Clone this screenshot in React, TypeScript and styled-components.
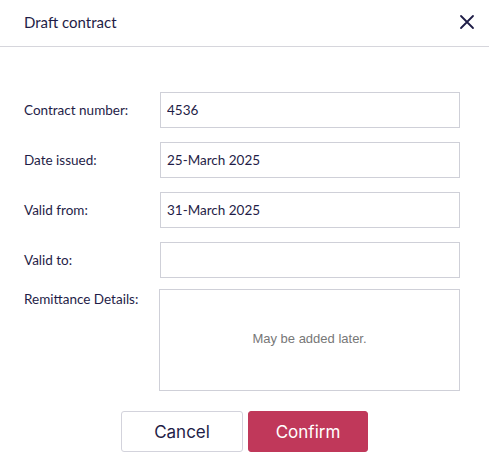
import React from "react";
import styled, { createGlobalStyle } from "styled-components";

const GlobalStyle = createGlobalStyle`
  html, body {
    margin: 0;
    padding: 0;
    background: #ffffff;
  }
  * {
    box-sizing: border-box;
  }
`;

interface Field {
  label: string;
  value: string;
}

const fields: Field[] = [
  { label: "Contract number:", value: "4536" },
  { label: "Date issued:", value: "25-March 2025" },
  { label: "Valid from:", value: "31-March 2025" },
  { label: "Valid to:", value: "" },
];

export default function App() {
  return (
    <>
      <GlobalStyle />
      <Dialog>
        <Header>
          <Title>Draft contract</Title>
          <CloseButton aria-label="Close">
            <svg width="16" height="16" viewBox="0 0 16 16" fill="none">
              <path d="M2 2L14 14M14 2L2 14" stroke="#1f1d47" strokeWidth="1.8" strokeLinecap="round" />
            </svg>
          </CloseButton>
        </Header>
        <Form>
          {fields.map((field) => (
            <Row key={field.label}>
              <Label>{field.label}</Label>
              <Input defaultValue={field.value} />
            </Row>
          ))}
          <Row $top>
            <Label $top>Remittance Details:</Label>
            <TextArea placeholder="May be added later." />
          </Row>
        </Form>
        <Actions>
          <Button>Cancel</Button>
          <Button $primary>Confirm</Button>
        </Actions>
      </Dialog>
    </>
  );
}

const Dialog = styled.div`
  width: 489px;
  height: 476px;
  background: #ffffff;
  display: flex;
  flex-direction: column;
`;

const Header = styled.div`
  height: 47px;
  border-bottom: 1px solid #d6d6dc;
  display: flex;
  align-items: center;
  justify-content: space-between;
  padding: 0 10px 2px 24px;
`;

const Title = styled.h1`
  margin: 0;
  font-family: "Lato", "Open Sans", sans-serif;
  font-size: 15px;
  font-weight: 400;
  color: #1f1d47;
`;

const CloseButton = styled.button`
  border: none;
  background: none;
  padding: 4px;
  display: flex;
  cursor: pointer;
`;

const Form = styled.div`
  display: flex;
  flex-direction: column;
  gap: 14px;
  padding: 45px 29px 0 24px;
`;

const Row = styled.div<{ $top?: boolean }>`
  display: flex;
  align-items: ${(p) => (p.$top ? "flex-start" : "center")};
  margin-top: ${(p) => (p.$top ? "-4px" : "0")};
`;

const Label = styled.label<{ $top?: boolean }>`
  width: 136px;
  flex-shrink: 0;
  font-family: "Lato", "Open Sans", sans-serif;
  font-size: 13.5px;
  color: #1f1d47;
  padding-top: ${(p) => (p.$top ? "3px" : "0")};
`;

const Input = styled.input`
  width: 300px;
  height: 36px;
  border: 1px solid #cfd0d8;
  padding: 0 6px;
  font-family: "Lato", "Open Sans", sans-serif;
  font-size: 13.5px;
  color: #1f1d47;
  outline: none;
`;

const TextArea = styled.textarea`
  width: 301px;
  height: 102px;
  margin-left: -1px;
  margin-top: 1px;
  border: 1px solid #cfd0d8;
  padding: 41px 6px 0;
  resize: none;
  text-align: center;
  font-family: "Liberation Sans", Arial, sans-serif;
  font-size: 13px;
  outline: none;
  &::placeholder {
    color: #777777;
  }
`;

const Actions = styled.div`
  display: flex;
  justify-content: center;
  gap: 5px;
  margin-top: 20px;
`;

const Button = styled.button<{ $primary?: boolean }>`
  width: ${(p) => (p.$primary ? "120px" : "122px")};
  height: 41px;
  border-radius: 3px;
  border: 1px solid ${(p) => (p.$primary ? "#c0385a" : "#d3d3dc")};
  background: ${(p) => (p.$primary ? "#c0385a" : "#ffffff")};
  color: ${(p) => (p.$primary ? "#ffffff" : "#1f1d47")};
  font-family: "Inter", "Noto Sans", sans-serif;
  font-size: 17px;
  font-weight: 400;
  cursor: pointer;
`;
